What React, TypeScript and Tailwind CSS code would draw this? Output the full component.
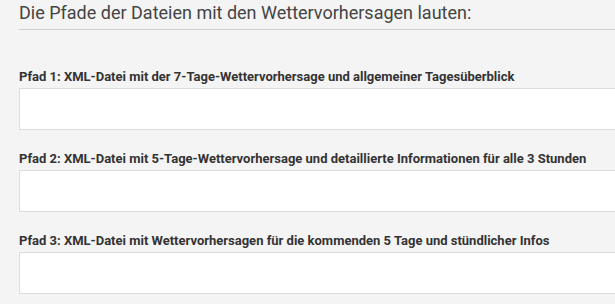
import React from "react";

const labels = [
  "Pfad 1: XML-Datei mit der 7-Tage-Wettervorhersage und allgemeiner Tagesüberblick",
  "Pfad 2: XML-Datei mit 5-Tage-Wettervorhersage und detaillierte Informationen für alle 3 Stunden",
  "Pfad 3: XML-Datei mit Wettervorhersagen für die kommenden 5 Tage und stündlicher Infos",
];

export default function App() {
  return (
    <div
      className="w-[615px] h-[304px] overflow-hidden bg-[#f4f4f4] pl-[19px]"
      style={{ fontFamily: "Roboto, 'Noto Sans', sans-serif" }}
    >
      <h2 className="pt-[2px] pb-[5px] text-[18px] leading-[22px] text-[#444] font-normal border-b border-[#cfcfcf]">
        Die Pfade der Dateien mit den Wettervorhersagen lauten:
      </h2>
      <div className="flex flex-col pt-[38px] gap-[20px]">
        {labels.map((l) => (
          <div key={l} className="flex flex-col">
            <label className="text-[13px] leading-[17px] font-bold text-[#333] mb-[3px]">{l}</label>
            <input
              type="text"
              className="h-[42px] w-[620px] bg-white border border-[#dcdcdc] outline-none"
            />
          </div>
        ))}
      </div>
    </div>
  );
}
